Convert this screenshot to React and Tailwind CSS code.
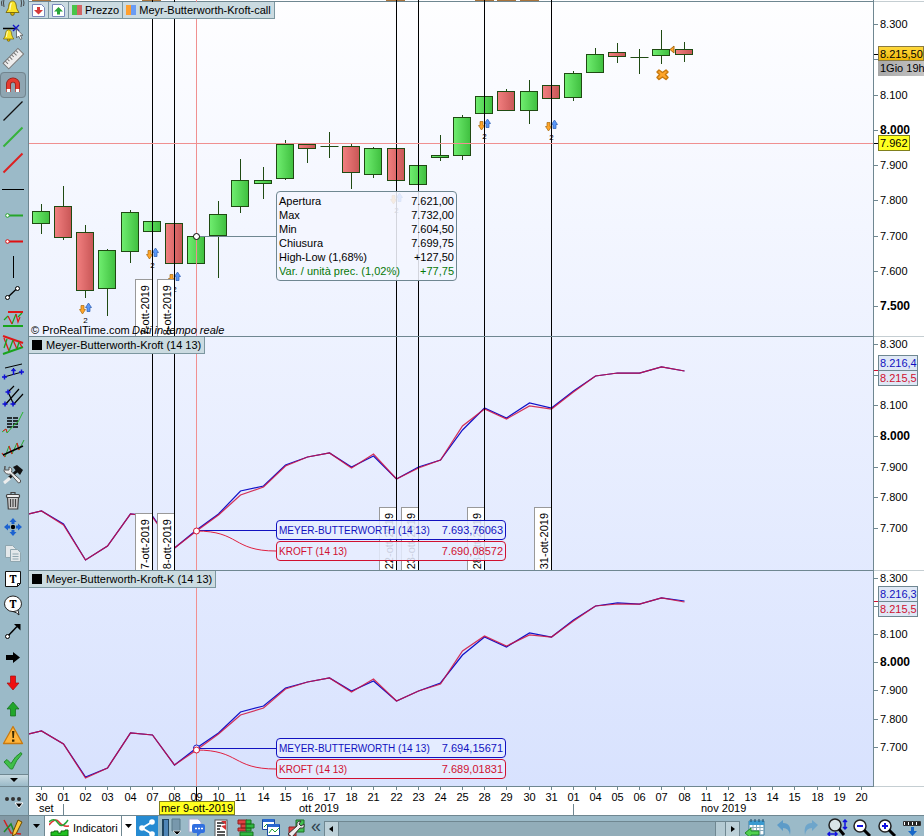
import { useState } from "react";

const STEP = 22.16;
const slotX = (i) => Math.round(12 + i * STEP) + 0.5;

// [slot, wick top, body top, body bottom, wick bottom, up?]
const candles = [
  [0, 204, 211, 223, 234, 1],
  [1, 186, 206, 237, 240, 0],
  [2, 225, 232, 290, 298, 0],
  [3, 249, 250, 288, 316, 1],
  [4, 210, 212, 251, 263, 1],
  [5, 221, 221, 231, 231, 1],
  [6, 223, 223, 263, 263, 0],
  [7, 224, 236, 263, 270, 1],
  [8, 201, 214, 235, 278, 1],
  [9, 159, 180, 206, 213, 1],
  [10, 167, 180, 183, 199, 1],
  [11, 140, 144, 178, 180, 1],
  [12, 144, 144, 148, 163, 0],
  [13, 132, 146, 146, 158, 1],
  [14, 144, 146, 172, 189, 0],
  [15, 147, 148, 174, 178, 1],
  [16, 148, 148, 180, 180, 0],
  [17, 165, 165, 184, 184, 1],
  [18, 135, 155, 157, 161, 1],
  [19, 115, 117, 155, 160, 1],
  [20, 96, 96, 113, 113, 1],
  [21, 89, 91, 110, 111, 0],
  [22, 80, 91, 110, 124, 1],
  [23, 85, 85, 98, 98, 0],
  [24, 71, 73, 97, 101, 1],
  [25, 48, 54, 72, 73, 1],
  [26, 43, 52, 56, 63, 0],
  [27, 49, 57, 57, 74, 1],
  [28, 30, 49, 55, 64, 1],
  [29, 42, 49, 54, 62, 0],
];

const signals = [
  [2, 303],
  [5, 248],
  [6, 272],
  [16, 193],
  [20, 119],
  [23, 120],
];

const eventSlots = [5, 6, 16, 17, 20, 23];

const upper = {
  blue: [511, 524, 560, 546, 514, 516, 548, 530, 514, 491, 486, 465, 457, 453, 467, 456, 479, 467, 460, 430, 408, 418, 403, 408, 391, 376, 373, 373, 367, 371],
  red: [511, 525, 560, 546, 514, 517, 548, 531, 515, 495, 487, 466, 457, 453, 468, 454, 479, 468, 460, 426, 409, 419, 406, 409, 392, 376, 373, 373, 367, 371],
};

const lower = {
  blue: [731, 744, 777, 768, 733, 735, 765, 748, 733, 712, 706, 688, 682, 678, 691, 681, 701, 691, 683, 655, 637, 647, 633, 637, 620, 606, 603, 604, 598, 601],
  red: [731, 744, 778, 768, 733, 735, 765, 750, 734, 715, 708, 689, 682, 678, 692, 679, 701, 691, 684, 651, 636, 646, 635, 637, 621, 606, 604, 604, 598, 602],
};

const days = "30 01 02 03 04 07 08 09 10 11 14 15 16 17 18 21 22 23 24 25 28 29 30 31 01 04 05 06 07 08 11 12 13 14 15 18 19 20".split(" ");

const quote = [
  ["Apertura", "7.621,00"],
  ["Max", "7.732,00"],
  ["Min", "7.604,50"],
  ["Chiusura", "7.699,75"],
  ["High-Low (1,68%)", "+127,50"],
  ["Var. / unità prec. (1,02%)", "+77,75"],
];

const linePath = (values) =>
  `M0 ${values[0] + 3} ` + values.map((y, i) => `L${slotX(i)} ${y}`).join(" ");

function Bell({ x = 0, y = 0, s = 1 }) {
  return (
    <g transform={`translate(${x} ${y}) scale(${s})`} stroke="#6b5a00" strokeWidth="0.8">
      <circle cx="7" cy="13.6" r="1.8" fill="#d9b400" />
      <path d="M7 1C4 1 3.4 4 3 7.5 2.700 9.500 1.500 10.500 0.500 12.500H13.500C12.500 10.500 11.300 9.500 11 7.500 10.600 4 10 1 7 1Z" fill="#f7e22b" />
      <path d="M6 3C4.800 4 4.800 7 4.300 10" stroke="#fffbc0" strokeWidth="1.300" fill="none" />
    </g>
  );
}

const plus = (x, y) => `M${x - 2.5} ${y}h5M${x} ${y - 2.5}v5`;

const tools = [
  ["Segnale acustico", <g><path d="M4 5q-1 4 0 8M2 6q-1 3 0 6M21 5q1 4 0 8M23.500 6q1 3 0 6" stroke="#444" fill="none" /><Bell x={5.500} y={6} /></g>],
  ["Allarme", <g><path d="M3 8.500h13" stroke="#000" strokeWidth="1.300" /><path d="M13 5l6 6M19 5l-6 6" stroke="#1414c8" strokeWidth="1.400" /><Bell x={3} y={9} s={0.8} /><path d="M16.500 9v9l2-2 2 3.500 1.500-1-1.800-3.200H23z" fill="#fff" stroke="#555" strokeWidth="0.8" /></g>],
  ["Righello", <g transform="rotate(-45 13 13)"><rect x="3" y="9" width="21" height="8" fill="#eee" stroke="#777" /><path d="M6 9v4M9 9v3M12 9v4M15 9v3M18 9v4M21 9v3" stroke="#777" /></g>],
  ["Magnete", <g fill="none"><path d="M8.500 20v-7.500a4.500 4.500 0 0 1 9 0V20" stroke="#8e221b" strokeWidth="5" /><path d="M8.500 20v-7.500a4.500 4.500 0 0 1 9 0V20" stroke="#e63b30" strokeWidth="3.500" /><path d="M8.500 17v3M17.500 17v3" stroke="#fff" strokeWidth="3.500" /></g>],
  ["Linea", <path d="M3.500 22.500L22.500 3.500" stroke="#111" strokeWidth="1.300" />],
  ["Linea verde", <path d="M3.500 22.500L22.500 3.500" stroke="#36b23a" strokeWidth="2" />],
  ["Linea rossa", <path d="M3.500 22.500L22.500 3.500" stroke="#dd2020" strokeWidth="2" />],
  ["Linea orizzontale", <path d="M2 13.500h22" stroke="#000" />],
  ["Semiretta verde", <g><path d="M8 13.500h15" stroke="#26a52b" strokeWidth="2" /><circle cx="7.500" cy="13.500" r="1.800" fill="#fff" stroke="#26a52b" /></g>],
  ["Semiretta rossa", <g><path d="M8 13.500h15" stroke="#e01010" strokeWidth="2" /><circle cx="7.500" cy="13.500" r="1.800" fill="#fff" stroke="#e01010" /></g>],
  ["Linea verticale", <path d="M13.500 2v22" stroke="#000" />],
  ["Segmento", <g stroke="#000"><path d="M7.500 17.500L17.500 8" strokeWidth="1.300" /><circle cx="7.500" cy="17.500" r="2" fill="#fff" /><circle cx="17.500" cy="8.500" r="2" fill="#fff" /></g>],
  ["Supporto e resistenza", <g fill="none"><path d="M8 6h15" stroke="#e01818" strokeWidth="2" /><path d="M3 20h20" stroke="#18a51c" strokeWidth="2" /><path d="M4 14l4-4M12 18l4-10M18 11l4-4" stroke="#18a51c" strokeWidth="1.200" /><path d="M8 10l4 8M16 8l2 8 2-5" stroke="#e01818" strokeWidth="1.200" /></g>],
  ["Triangolo", <g fill="none"><path d="M3 4l20 7" stroke="#e01818" strokeWidth="2" /><path d="M3 22l20-7" stroke="#18a51c" strokeWidth="2" /><path d="M4 6l5 13M13 8l4 9M19 10l3 5" stroke="#e01818" strokeWidth="1.300" /><path d="M4 16l3-9M9 19l4-11M17 17l2-7" stroke="#18a51c" strokeWidth="1.300" /></g>],
  ["Canale", <g><path d="M5 10l17-4M4 19l18-5M13.500 10v6" stroke="#000" /><path d={plus(4.500, 19) + plus(21.500, 14) + "M13.500 17v-6m-2 2l2-2 2 2"} stroke="#1010d8" strokeWidth="1.500" fill="none" /></g>],
  ["Forchetta", <g><path d="M8 8l6-6M5 21l14-16M13 21l10-11M8 8l6 13" stroke="#000" strokeWidth="1.200" /><path d={plus(8, 8) + plus(5, 20) + plus(13, 20)} stroke="#1010d8" strokeWidth="1.500" /></g>],
  ["Fibonacci", <g><path d="M7 8h12M7 11h12M7 14h12M7 17h12" stroke="#000" strokeDasharray="5 1" strokeWidth="1.400" /><path d="M2 22l4-3 1 4 7-8 4-3 5-10" stroke="#26b52b" fill="none" /><path d="M3 21l3-2 1 3" stroke="#e02020" fill="none" /></g>],
  ["Regressione", <g fill="none"><path d="M2 17l3 4 4-11 3 8 5-11 2 7 5-10" stroke="#26a52b" /><path d="M2 17l3 4M9 10l3 8M17 7l2 7" stroke="#e02020" strokeWidth="1.200" /><path d="M3 19l20-9" stroke="#000" strokeWidth="1.500" /></g>],
  ["Strumenti", <g><path d="M9 16l9-8" stroke="#111" strokeWidth="3" /><path d="M13 5l4-2 6 5-3 5-3-3z" fill="#111" /><path d="M5 4v4h4V5q4 1 2.500 5l9 8q1 3-2 3l-8-9Q6 13 4 9z" fill="#eee" stroke="#555" /><path d="M4 21l6-5" stroke="#eee" strokeWidth="3" /></g>],
  ["Cestino", <g stroke="#444" strokeWidth="1.200"><path d="M7.500 9.500h11l-.8 11.500H8.300z" fill="#cfcfcf" /><rect x="6.500" y="6.500" width="13" height="3" rx="1" fill="#eee" /><path d="M11 6V4.500h4V6M10.500 11v8M13 11v8M15.500 11v8" fill="none" /></g>],
  ["Sposta", <g fill="#1c62d0"><circle cx="13" cy="13" r="2.200" fill="#000" /><path d="M13 4l3.500 4h-2v2h-3V8h-2zM13 22l3.500-4h-2v-2h-3v2h-2zM4 13l4-3.500v2h2v3H8v2zM22 13l-4-3.500v2h-2v3h2v2z" /></g>],
  ["Copia", <g fill="#e3e8ea" stroke="#8fa6af"><path d="M5.500 5.500h7l3 3v9h-10z" /><path d="M10.500 9.500h7l3 3v9h-10z" /><path d="M12.500 14h6M12.500 16.500h6M12.500 19h6" /></g>],
  ["Testo", <g><path d="M5.500 5.500h15v12l-3 3h-12z" fill="#fff" stroke="#111" /><path d="M17.500 20.500v-3h3" fill="none" stroke="#111" /><text x="13" y="17" textAnchor="middle" className="font-serif text-xs font-bold">T</text></g>],
  ["Fumetto", <g><path d="M13 4a8.500 7.800 0 1 1 0 15.600 8.500 7.800 0 0 1 0-15.600M13 19.500q4 1 6 3.500l-1-5" fill="#fff" stroke="#222" /><text x="13" y="16" textAnchor="middle" className="font-serif text-xs font-bold">T</text></g>],
  ["Freccia", <g><path d="M7.500 18.500L17 8.500" stroke="#000" strokeWidth="1.500" /><path d="M14 6h6.500v6.500z" /><circle cx="7.500" cy="18.500" r="2" fill="#fff" stroke="#000" /></g>],
  ["Freccia destra", <path d="M6 11h7V8l7 5.500-7 5.500v-3H6z" />],
  ["Freccia giù", <path d="M10.500 6h5v7h3.500l-6 7-6-7h3.500z" fill="#f01010" stroke="#a01010" strokeWidth="0.7" />],
  ["Freccia su", <path d="M10.500 20h5v-7h3.500l-6-7-6 7h3.500z" fill="#22a62c" stroke="#126a18" strokeWidth="0.700" />],
  ["Avviso", <g><path d="M13 4.500L22.500 21.500h-19z" fill="#ffb43c" stroke="#c87a10" strokeLinejoin="round" strokeWidth="1.300" /><path d="M12 9h2.400l-.5 7h-1.400zM12 17.500h2.400v2.300H12z" fill="#3a2a00" /></g>],
  ["Conferma", <path d="M4 14l3-2.500 4 4Q15 8 21 4.500l1 1.500Q16 12 12.500 21h-2z" fill="#3fbf4a" stroke="#248a2d" />],
];

function ToolBar() {
  const [active, setActive] = useState("Magnete");
  return (
    <nav aria-label="Strumenti di disegno" className="flex w-[29px] shrink-0 flex-col border-r border-[#6f8791] bg-[#9bbac8]">
      {tools.map(([name, icon], i) => (
        <button
          key={name}
          type="button"
          aria-label={name}
          onClick={() => setActive(name)}
          className={
            "flex w-[26px] shrink-0 items-end overflow-hidden rounded-sm " +
            (i === 0 ? "h-5 " : "h-[26px] ") +
            (active === name ? "bg-[#8fa6b2] outline -outline-offset-1 outline-[#71858f]" : "")
          }
        >
          <svg width="26" height="26" className="shrink-0">{icon}</svg>
        </button>
      ))}
      <button type="button" aria-label="Altri strumenti" className="flex h-[13px] items-center justify-center border-y border-[#6f8791] bg-gradient-to-b from-[#c9dbe2] to-[#9bbac8]">
        <svg width="10" height="5"><path d="M1 0h8L5 4z" /></svg>
      </button>
      <button type="button" aria-label="Opzioni" className="flex min-h-7 flex-1 items-center">
        <svg width="28" height="20">
          <circle cx="7" cy="8" r="2" fill="#333" /><circle cx="13" cy="8" r="2" fill="#333" /><circle cx="19" cy="8" r="2" fill="#333" />
          <path d="M15 12h8l-4 5z" stroke="#fff" />
        </svg>
      </button>
    </nav>
  );
}

function Series({ data }) {
  return (
    <g fill="none" strokeWidth="1.25">
      <path d={linePath(data.blue)} stroke="#1212c8" />
      <path d={linePath(data.red)} stroke="#d0103c" strokeOpacity="0.85" />
    </g>
  );
}

function Flag({ slot, top, bottom, label }) {
  const x = slotX(slot);
  return (
    <g>
      <rect x={x - 17} y={top + 0.5} width="17" height={bottom - top} fill="#fff" stroke="#999" />
      <text transform={`translate(${x - 4} ${top + 6}) rotate(-90)`} textAnchor="end">{label}</text>
    </g>
  );
}

function EventLines({ bottom }) {
  return eventSlots.map((s) => <path key={s} d={`M${slotX(s)} 0V${bottom}`} stroke="#000" />);
}

function Cursor() {
  return <path d={`M${slotX(7)} 0V800`} stroke="#f09090" />;
}

function Signal({ slot, y }) {
  return (
    <g transform={`translate(${slotX(slot) - 7} ${y})`} strokeWidth="0.7">
      <path d="M2.500 2.500h3v4H7L4 11 1 6.500h1.500z" fill="#ffa52a" stroke="#a86a10" />
      <path d="M8.500 8.500h3v-4H13L10 0 7 4.500h1.500z" fill="#5b98f8" stroke="#2b5cb0" />
      <text x="7" y="20" textAnchor="middle" className="text-[8px]">2</text>
    </g>
  );
}

function Candle({ c }) {
  const [slot, wickTop, top, bottom, wickBottom, up] = c;
  const x = slotX(slot);
  return (
    <g stroke="#1f4a12">
      <path d={`M${x} ${wickTop}V${wickBottom}`} />
      {top === bottom ? (
        <path d={`M${x - 9} ${top + 0.5}h18`} />
      ) : (
        <rect x={x - 9} y={top + 0.5} width="17" height={bottom - top} fill={up ? "url(#up)" : "url(#down)"} />
      )}
    </g>
  );
}

function Axis({ top, labels, ticks }) {
  return (
    <svg className="h-full w-full">
      <g transform={`translate(0 ${-top})`}>
        {labels.map(([text, y, bold]) => (
          <g key={text}>
            <path d={`M0 ${y + 0.5}h4`} stroke="#6f8791" />
            <text x="6" y={y + 4} className={bold ? "text-xs font-bold" : "text-[11px]"}>{text}</text>
          </g>
        ))}
        {ticks.map(([y, color]) => <path key={y} d={`M0 ${y + 0.5}h4`} stroke={color} />)}
      </g>
    </svg>
  );
}

function Panel({ children, axis, className }) {
  return (
    <section className={"flex " + className}>
      <div className="relative min-w-0 flex-1 border-b border-r border-[#6f8791]">{children}</div>
      <div className="relative w-[50px] shrink-0 border-b border-[#c5ced2] bg-white">{axis}</div>
    </section>
  );
}

function Title({ children }) {
  return (
    <h2 className="absolute left-0 top-0 flex h-[17px] items-center gap-1 whitespace-nowrap border-b border-r border-[#7c97a0] bg-[#cbdbe1] px-[3px]">
      <span className="size-2.5 bg-black" />
      {children}
    </h2>
  );
}

function Readouts({ blue, red, className }) {
  return (
    <dl className={"absolute left-[247px] flex w-[230px] flex-col gap-px whitespace-nowrap " + className}>
      <div className="flex h-5 items-center justify-between rounded-sm border border-[#1212c0] bg-[#e6edffdd] px-0.5 text-[#1212c0]">
        <dt className="text-[10px]">MEYER-BUTTERWORTH (14 13)</dt>
        <dd>{blue}</dd>
      </div>
      <div className="flex h-5 items-center justify-between rounded-sm border border-[#d01030] bg-[#e6edffdd] px-0.5 text-[#d01030]">
        <dt className="text-[10px]">KROFT (14 13)</dt>
        <dd>{red}</dd>
      </div>
    </dl>
  );
}

function AxisPair({ blue, red, className }) {
  return (
    <div className={"absolute left-1 flex w-10 flex-col border border-[#6f8791] bg-[#dfe8f6] leading-[14px] " + className}>
      <span className="border-b border-[#6f8791] px-px text-[#1212c0]">{blue}</span>
      <span className="px-px text-[#d01030]">{red}</span>
    </div>
  );
}

function LegendButton({ label, children }) {
  return (
    <button type="button" aria-label={label} className="flex h-full items-center gap-[3px] border-r border-[#7c97a0] px-[3px]">
      {children}
    </button>
  );
}

function PricePanel() {
  return (
    <Panel
      className="h-[337px]"
      axis={
        <>
          <Axis
            top={0}
            labels={[["8.300", 24], ["8.100", 95], ["8.000", 130, true], ["7.900", 165], ["7.800", 200], ["7.700", 236], ["7.600", 271], ["7.500", 306, true]]}
            ticks={[[59, "#6f8791"], [54, "#000"], [143, "#000"]]}
          />
          <div className="absolute left-0 top-px h-px w-full bg-[#c5ced2]" />
          <div className="absolute left-1 top-[46px] w-[46px] whitespace-nowrap leading-[15px]">
            <div className="h-[15px] border border-[#8a7a40] bg-gradient-to-b from-[#ffd83a] to-[#f0b800] px-px leading-[14px]">8.215,50</div>
            <div className="bg-gradient-to-r from-[#a8a8a8] to-[#c4c4c4] px-0.5">1Gio 19h</div>
          </div>
          <div className="absolute left-1 top-[135px] h-4 border border-[#80801c] bg-[#ffff20] px-px leading-[14px]">7.962</div>
        </>
      }
    >
      <svg className="absolute h-full w-full">
        <defs>
          <linearGradient id="up"><stop stopColor="#70ee70" /><stop offset="1" stopColor="#3fbf3f" /></linearGradient>
          <linearGradient id="down"><stop stopColor="#f28080" /><stop offset="1" stopColor="#c85656" /></linearGradient>
        </defs>
        <path d="M0 1.500h2000" stroke="#6f8791" />
        <path d="M3 .5h19M113 .5h19M357 .5h19M446 .5h19M468 .5h19M491 .5h19" stroke="#a8743c" />
        {candles.map((c) => <Candle key={c[0]} c={c} />)}
        {signals.map(([slot, y]) => <Signal key={slot} slot={slot} y={y} />)}
        <Flag slot={5} top={279} bottom={340} label="7-ott-2019" />
        <Flag slot={6} top={279} bottom={340} label="8-ott-2019" />
        <EventLines bottom={336} />
        <path d="M0 143.500h2000" stroke="#f09090" />
        <Cursor />
        <path d="M167.500 236.500h80" stroke="#6f8791" />
        <circle cx="167.500" cy="236.500" r="3" fill="#fff" stroke="#000" />
        <path d="M630 70l3.500 2.500 3.500-2.500 2 2-2.500 2.500 2.500 3-2 2-3.500-2.500-3.500 2.500-2-2 2.500-3-2.500-2.500z" fill="#ffa52a" stroke="#c87a10" strokeLinejoin="round" strokeWidth="1.500" />
        <path d="M641 49.500l4-3.500v7z" fill="#ffa52a" stroke="#a86a10" />
        <text x="2" y="334">© ProRealTime.com</text>
        <text x="103" y="334" className="italic">Dati in tempo reale</text>
      </svg>
      <div className="absolute left-0 top-[2px] flex h-[17px] items-center whitespace-nowrap border-b border-[#7c97a0] bg-[#cbdbe1]">
        <LegendButton label="Sposta giù">
          <svg width="13" height="13"><path d="M.5.500h9l3 3v9H.5z" fill="#fff" stroke="#7788bb" /><path d="M5 3h3v3h3l-4.500 4.500L2 6h3z" fill="#d63a3a" /></svg>
        </LegendButton>
        <LegendButton label="Sposta su">
          <svg width="13" height="13"><path d="M.5.500h9l3 3v9H.5z" fill="#fff" stroke="#7788bb" /><path d="M5 10.500h3v-3h3L6.500 3 2 7.500h3z" fill="#28a638" /></svg>
        </LegendButton>
        <LegendButton>
          <svg width="10" height="10"><path d="M0 0h5v10H0z" fill="#48c448" /><path d="M5 0h5v10H5z" fill="#d26464" /></svg>
          Prezzo
        </LegendButton>
        <LegendButton>
          <svg width="10" height="10"><path d="M0 0h5v10H0z" fill="#ffa030" /><path d="M5 0h5v10H5z" fill="#6a9cf4" /></svg>
          Meyr-Butterworth-Kroft-call
        </LegendButton>
      </div>
      <dl className="absolute left-[247px] top-[191px] w-[181px] whitespace-nowrap rounded-sm border border-[#6f8791] bg-[#f3f6ffdd] px-0.5 py-0.5 leading-[14px]">
        {quote.map(([name, value]) => (
          <div key={name} className="flex justify-between last:text-[#087808]">
            <dt>{name}</dt>
            <dd>{value}</dd>
          </div>
        ))}
      </dl>
    </Panel>
  );
}

function UpperPanel() {
  return (
    <Panel
      className="h-[234px]"
      axis={
        <>
          <Axis
            top={337}
            labels={[["8.300", 344], ["8.100", 405], ["8.000", 436, true], ["7.900", 467], ["7.800", 497], ["7.700", 528]]}
            ticks={[[370, "#d01030"], [375, "#6f8791"]]}
          />
          <AxisPair blue="8.216,4" red="8.215,5" className="top-[18px]" />
        </>
      }
    >
      <svg className="absolute h-full w-full">
        <g transform="translate(0 -337)">
          <Series data={upper} />
          <Flag slot={5} top={513} bottom={575} label="7-ott-2019" />
          <Flag slot={6} top={513} bottom={575} label="8-ott-2019" />
          <Flag slot={16} top={507} bottom={575} label="22-ott-2019" />
          <Flag slot={17} top={507} bottom={575} label="23-ott-2019" />
          <Flag slot={20} top={507} bottom={575} label="28-ott-2019" />
          <Flag slot={23} top={507} bottom={575} label="31-ott-2019" />
          <EventLines bottom={575} />
          <Cursor />
          <path d="M167 530.500h80" stroke="#1212c0" />
          <path d="M167 531C211 531 203 551 247 551" fill="none" stroke="#e02040" />
          <circle cx="167.500" cy="531" r="3" fill="#fff" stroke="#d01030" />
        </g>
      </svg>
      <Title>Meyer-Butterworth-Kroft (14 13)</Title>
      <Readouts blue="7.693,76063" red="7.690,08572" className="top-[183px]" />
    </Panel>
  );
}

function LowerPanel() {
  return (
    <Panel
      className="h-[216px]"
      axis={
        <>
          <Axis
            top={571}
            labels={[["8.300", 578], ["8.100", 634], ["8.000", 662, true], ["7.900", 690], ["7.800", 719], ["7.700", 747]]}
            ticks={[[601, "#d01030"], [606, "#6f8791"]]}
          />
          <AxisPair blue="8.216,3" red="8.215,5" className="top-[15px]" />
        </>
      }
    >
      <svg className="absolute h-full w-full">
        <g transform="translate(0 -571)">
          <Series data={lower} />
          <Cursor />
          <path d="M167 748.500h80" stroke="#1212c0" />
          <path d="M167 750C211 750 203 769 247 769" fill="none" stroke="#e02040" />
          <circle cx="167.500" cy="748" r="3" fill="#fff" stroke="#1212c0" />
          <circle cx="167.500" cy="750" r="3" fill="#fff" stroke="#d01030" />
        </g>
      </svg>
      <Title>Meyer-Butterworth-Kroft-K (14 13)</Title>
      <Readouts blue="7.694,15671" red="7.689,01831" className="top-[167px]" />
    </Panel>
  );
}

function TimeAxis() {
  return (
    <div className="relative h-7 bg-white">
      <svg className="h-full w-full">
        {days.map((d, i) => (
          <g key={i}>
            <path d={`M${slotX(i)} 0v3`} stroke="#6f8791" />
            <text x={slotX(i)} y="14" textAnchor="middle">{d}</text>
          </g>
        ))}
        <path d="M34.500 17v11M544.500 17v11" stroke="#6f8791" />
        <path d="M167.500 0v15" stroke="#000" />
        <text x="10" y="25">set</text>
        <text x="270" y="25">ott 2019</text>
        <text x="672" y="25">nov 2019</text>
      </svg>
      <div className="absolute left-[130px] top-[14px] h-[14px] w-[76px] border border-[#80801c] bg-[#ffff20] text-center leading-[13px]">mer 9-ott-2019</div>
    </div>
  );
}

function BarIcon({ label, children, className = "w-[25px]" }) {
  return (
    <button type="button" aria-label={label} className={"flex h-full shrink-0 items-start justify-center overflow-hidden " + className}>
      <svg width="24" height="24" className="shrink-0">{children}</svg>
    </button>
  );
}

function BottomBar() {
  return (
    <footer className="flex h-[21px] items-stretch overflow-hidden border-t border-[#6f8791] bg-[#9bbac8]">
      <BarIcon label="Disegna" className="w-[29px] border-r border-[#6f8791] bg-[#8299a5]">
        <path d="M2 4l7 13 10 1" stroke="#d02020" strokeWidth="1.500" fill="none" /><path d="M2 16l7-8 4 10" stroke="#1d8a28" fill="none" strokeWidth="1.500" />
        <path d="M16 4l4 2-6 12-3.500 2 .500-4z" fill="#ffc93c" stroke="#6a4a00" />
      </BarIcon>
      <button type="button" aria-label="Menu disegno" className="flex w-4 shrink-0 items-center justify-center border-r border-[#6f8791] bg-[#a9c3ce]">
        <svg width="8" height="5"><path d="M0 0h7L3.500 4z" /></svg>
      </button>
      <button type="button" className="flex w-[77px] shrink-0 items-start gap-1 border-r border-[#6f8791] bg-white pl-1 leading-6">
        <svg width="20" height="20" className="shrink-0">
          <path d="M0 9q6-8 10-3t10 4" stroke="#e03030" fill="none" strokeWidth="1.500" /><path d="M0 6q5-5 9 1t10-3" stroke="#28a838" fill="none" strokeWidth="1.500" />
          <path d="M2 20v-4h3v-1h4v2h3v-2h4v-1h3v6z" fill="#20c020" stroke="#106a10" />
        </svg>
        Indicatori
      </button>
      <button type="button" aria-label="Menu indicatori" className="flex w-[14px] shrink-0 items-center justify-center bg-white">
        <svg width="8" height="5"><path d="M0 0h7L3.500 4z" /></svg>
      </button>
      <BarIcon label="Condividi" className="w-[22px] bg-[#268bd2]">
        <path d="M17 6L7 12l10 6" stroke="#fff" strokeWidth="2" fill="none" /><circle cx="17" cy="6" r="2.800" fill="#fff" /><circle cx="7" cy="12" r="2.800" fill="#fff" /><circle cx="17" cy="18" r="2.800" fill="#fff" />
      </BarIcon>
      <BarIcon label="Finestre">
        <path d="M3 3h7v17H3z" fill="#20455f" /><path d="M5 4h4v16H5z" fill="#4f86b8" /><path d="M13 3h8v12h-8z" fill="#7898ac" stroke="#587888" /><path d="M14 15h8l-4 4z" stroke="#fff" strokeWidth="0.700" />
      </BarIcon>
      <BarIcon label="Chat">
        <path d="M5 3h9l3 3v10H5z" fill="#fff" stroke="#aac" /><rect x="8" y="8" width="13" height="9" rx="2" fill="#3170e0" /><path d="M13 17v4l4-4z" fill="#3170e0" /><path d="M11 12.500h2M14 12.500h2M17 12.500h2" stroke="#fff" strokeWidth="1.500" />
      </BarIcon>
      <BarIcon label="Elenco ordini">
        <rect x="6" y="4" width="12" height="17" fill="#fff" stroke="#555" /><path d="M8 7h7M8 10h4M8 13h3M8 16h8M8 19h8" stroke="#222" strokeWidth="1.300" /><path d="M12 5h5v4zM12 10l5 4v-5z" fill="#d03030" />
      </BarIcon>
      <BarIcon label="Profondità">
        <path d="M4 4h9v4H4zM7 8h6v4H7zM4 12h9v3H4z" fill="#e04040" stroke="#902020" /><path d="M12 4h5v4h-5zM12 8h8v4h-8zM12 12h5v3h-5zM6 16h13v4H6z" fill="#30b840" stroke="#187020" />
      </BarIcon>
      <BarIcon label="Grafici">
        <path d="M3.500 3.500h12v10h-12z" fill="#fff" stroke="#1848a0" /><path d="M4 4.500h11" stroke="#2868d0" strokeWidth="3" /><path d="M5 11l3-3 2 3" stroke="#20a030" fill="none" /><path d="M8.500 8.500h12v11h-12z" fill="#fff" stroke="#1848a0" /><path d="M9 9.500h11" stroke="#2868d0" strokeWidth="3" /><path d="M10 17l3-4 3 3 4-4" stroke="#20a030" fill="none" />
      </BarIcon>
      <BarIcon label="Impostazioni">
        <path d="M12 4h8v12h-8z" fill="#42c050" stroke="#187020" /><path d="M5 11h7v9H5z" fill="#e04040" stroke="#902020" /><path d="M4 18l9-8q-1-5 4-5l-2 3 2 2 3-2q1 5-4 4l-8 9z" fill="#eee" stroke="#333" />
      </BarIcon>
      <button type="button" aria-label="Comprimi" className="flex w-4 shrink-0 items-center justify-center text-lg leading-3 text-[#304450]">«</button>
      <div className="mt-[5px] flex min-w-0 flex-1 border border-b-0 border-[#6f8791] bg-[#92adb9]">
        <button type="button" aria-label="Scorri a sinistra" className="flex w-[14px] shrink-0 items-center justify-center border-r border-[#6f8791] bg-[#bdd1d9]">
          <svg width="5" height="8"><path d="M4 1v6L0 4z" /></svg>
        </button>
        <div className="flex-1" />
        <div className="w-[10px] shrink-0 border-l border-[#6f8791] bg-[#b4cad3]" />
        <button type="button" aria-label="Scorri a destra" className="flex w-[14px] shrink-0 items-center justify-center border-l border-[#6f8791] bg-[#bdd1d9]">
          <svg width="5" height="8"><path d="M1 1v6l4-3z" /></svg>
        </button>
      </div>
      <BarIcon label="Calendario" className="w-[30px]">
        <path d="M6 5h15v14H6z" fill="#fff" stroke="#3a7ca0" /><path d="M6 7h15" stroke="#3a9ad0" strokeWidth="4" /><path d="M8 3v3M12 3v3M16 3v3M20 3v3" stroke="#1a4a6a" /><path d="M7 11.500h14M7 14.500h14M10 9v10M13.500 9v10M17 9v10" stroke="#8ab" /><path d="M2 17l6-5v3h8v4H8v3z" fill="#50d050" stroke="#208828" />
      </BarIcon>
      <BarIcon label="Annulla" className="w-7">
        <path d="M5 9l6-5v3q9 0 7 12-1-7-7-7v3z" fill="#5d9bc8" />
      </BarIcon>
      <BarIcon label="Ripeti" className="w-[26px]">
        <path d="M19 9l-6-5v3Q4 7 6 19q1-7 7-7v3z" fill="#6da5cb" />
      </BarIcon>
      <BarIcon label="Adatta zoom">
        <circle cx="10" cy="9" r="6" fill="#d8e4e8" stroke="#222" strokeWidth="1.500" /><path d="M14 13l5 6" stroke="#000" strokeWidth="3" /><path d="M20 4v9m-2-7l2-2 2 2m-4 5l2 2 2-2M3 18h9m-7-2l-2 2 2 2m5-4l2 2-2 2" stroke="#1010e0" strokeWidth="1.500" fill="none" />
      </BarIcon>
      <BarIcon label="Riduci">
        <circle cx="10" cy="10" r="6" fill="#fff" stroke="#222" strokeWidth="1.500" /><path d="M14 14l6 6" stroke="#000" strokeWidth="3" /><path d="M7 10h6" stroke="#1010e0" strokeWidth="2" />
      </BarIcon>
      <BarIcon label="Ingrandisci">
        <circle cx="10" cy="10" r="6" fill="#fff" stroke="#222" strokeWidth="1.500" /><path d="M14 14l6 6" stroke="#000" strokeWidth="3" /><path d="M7 10h6M10 7v6" stroke="#1010e0" strokeWidth="2" />
      </BarIcon>
      <BarIcon label="Altro">
        <path d="M3.500 5.500h17v4h-17z" fill="#fff" stroke="#333" /><path d="M5 7.500h15" stroke="#222" strokeWidth="3" strokeDasharray="3 1" /><path d="M11 11h3v4h3l-4.500 5L8 15h3z" fill="#1868c8" />
      </BarIcon>
    </footer>
  );
}

export default function App() {
  return (
    <div className="flex min-h-screen flex-col bg-white font-['Liberation_Sans',Arial,sans-serif] text-[11px] text-black">
      <div className="flex">
        <ToolBar />
        <main className="min-w-0 flex-1">
          <div className="bg-gradient-to-b from-[#fefeff] to-[#d8e2fe]">
            <PricePanel />
            <UpperPanel />
            <LowerPanel />
          </div>
          <TimeAxis />
        </main>
      </div>
      <BottomBar />
    </div>
  );
}
